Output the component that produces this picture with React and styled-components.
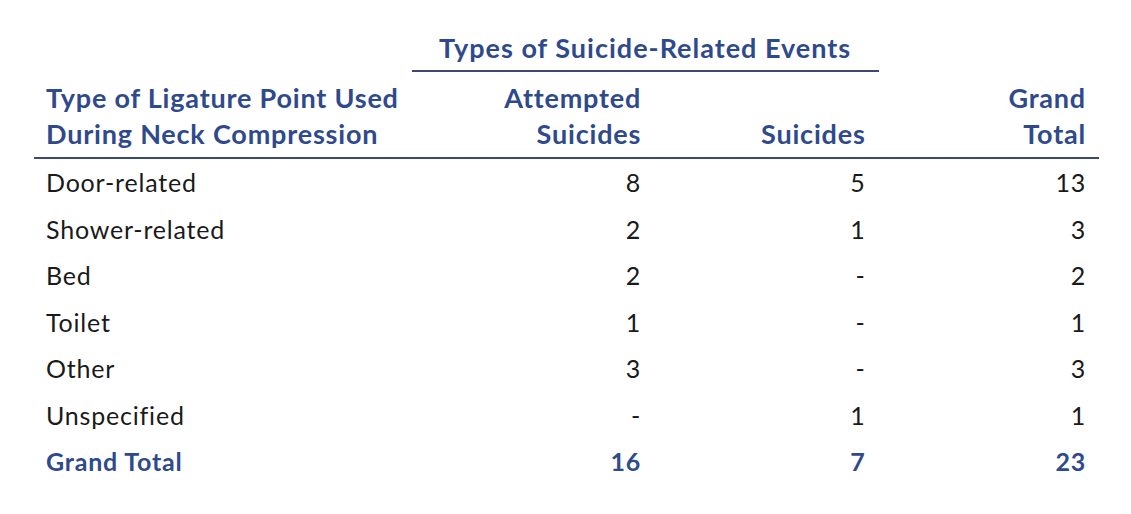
import React from 'react';
import styled, { createGlobalStyle } from 'styled-components';

const GlobalStyle = createGlobalStyle`
  body {
    margin: 0;
    background: #ffffff;
    font-family: Lato, "Liberation Sans", sans-serif;
  }
`;

const rows = [
  { label: 'Door-related', attempted: '8', suicides: '5', total: '13' },
  { label: 'Shower-related', attempted: '2', suicides: '1', total: '3' },
  { label: 'Bed', attempted: '2', suicides: '-', total: '2' },
  { label: 'Toilet', attempted: '1', suicides: '-', total: '1' },
  { label: 'Other', attempted: '3', suicides: '-', total: '3' },
  { label: 'Unspecified', attempted: '-', suicides: '1', total: '1' },
];

const App = () => {
  return (
    <Page>
      <GlobalStyle />
      <Table>
        <colgroup>
          <col style={{ width: 377 }} />
          <col style={{ width: 242 }} />
          <col style={{ width: 224 }} />
          <col style={{ width: 220 }} />
        </colgroup>
        <thead>
          <tr>
            <th />
            <SpanHead colSpan={2}>Types of Suicide-Related Events</SpanHead>
            <th />
          </tr>
          <HeadRow>
            <HeadCell align="left">
              Type of Ligature Point Used
              <br />
              During Neck Compression
            </HeadCell>
            <HeadCell>
              Attempted
              <br />
              Suicides
            </HeadCell>
            <HeadCell>Suicides</HeadCell>
            <HeadCell>
              Grand
              <br />
              Total
            </HeadCell>
          </HeadRow>
        </thead>
        <tbody>
          {rows.map(r => (
            <tr key={r.label}>
              <Cell align="left">{r.label}</Cell>
              <Cell>{r.attempted}</Cell>
              <Cell>{r.suicides}</Cell>
              <Cell>{r.total}</Cell>
            </tr>
          ))}
          <tr>
            <Cell align="left" $total>
              Grand Total
            </Cell>
            <Cell $total>16</Cell>
            <Cell $total>7</Cell>
            <Cell $total>23</Cell>
          </tr>
        </tbody>
      </Table>
    </Page>
  );
};

export default App;

const Page = styled.div`
  width: 1131px;
  height: 514px;
  padding: 28px 0 0 34px;
  box-sizing: border-box;
  background: #ffffff;
`;

const Table = styled.table`
  border-collapse: collapse;
  table-layout: fixed;
  width: 1065px;
  color: #1a1a1a;
  font-size: 25px;
`;

const SpanHead = styled.th`
  color: #2f4a8c;
  font-weight: 700;
  font-size: 27px;
  letter-spacing: 1px;
  white-space: nowrap;
  text-align: center;
  padding: 4px 0 6px;
  line-height: 32px;
  border-bottom: 2px solid #3b4a6e;
`;

const HeadRow = styled.tr`
  border-bottom: 2px solid #3b4a6e;
`;

const HeadCell = styled.th`
  color: #2f4a8c;
  font-weight: 700;
  font-size: 27px;
  letter-spacing: 0.8px;
  white-space: nowrap;
  line-height: 36px;
  text-align: ${p => (p.align === 'left' ? 'left' : 'right')};
  vertical-align: bottom;
  padding: 8px 13px 5px 12px;
`;

const Cell = styled.td`
  text-align: ${p => (p.align === 'left' ? 'left' : 'right')};
  color: ${p => (p.$total ? '#2f4a8c' : '#1a1a1a')};
  font-weight: ${p => (p.$total ? 700 : 400)};
  letter-spacing: 0.8px;
  white-space: nowrap;
  height: 46.5px;
  padding: 0 13px 0 12px;
  line-height: 30px;
  vertical-align: middle;
`;
